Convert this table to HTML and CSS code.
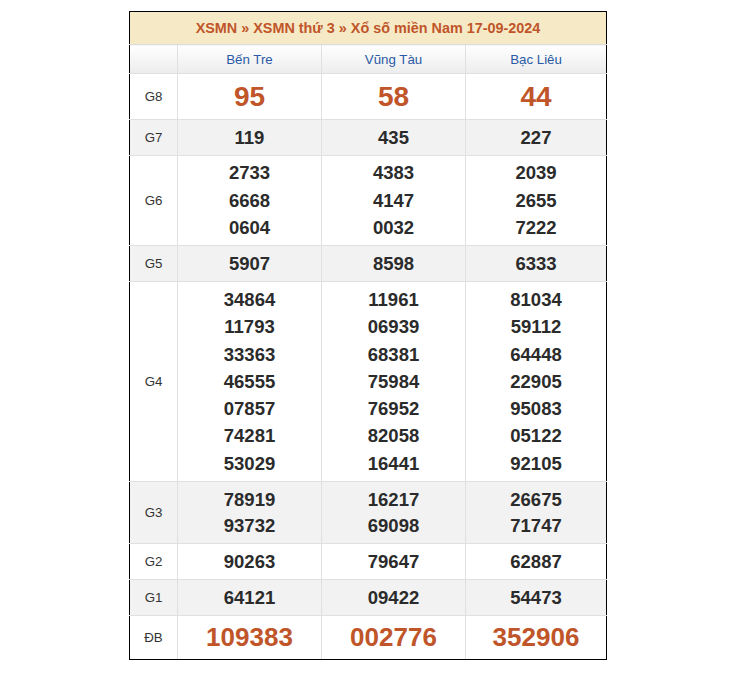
FILE: index.html
```
<!DOCTYPE html>
<html lang="vi">
<head>
<meta charset="utf-8">
<link rel="stylesheet" href="styles.css">
</head>
<body>
<table class="kq">
  <colgroup>
    <col class="c-lbl"><col class="c-prov"><col class="c-prov"><col class="c-prov-last">
  </colgroup>
  <thead>
    <tr class="r-title">
      <th colspan="4"><span>XSMN</span> » <span>XSMN thứ 3</span> » <span>Xổ số miền Nam 17-09-2024</span></th>
    </tr>
    <tr class="r-names">
      <th></th><th>Bến Tre</th><th>Vũng Tàu</th><th>Bạc Liêu</th>
    </tr>
  </thead>
  <tbody>
    <tr class="r-g8"><td class="lbl">G8</td><td class="big">95</td><td class="big">58</td><td class="big">44</td></tr>
    <tr class="r-1 alt"><td class="lbl">G7</td><td>119</td><td>435</td><td>227</td></tr>
    <tr class="r-g6"><td class="lbl">G6</td>
      <td><div>2733</div><div>6668</div><div>0604</div></td>
      <td><div>4383</div><div>4147</div><div>0032</div></td>
      <td><div>2039</div><div>2655</div><div>7222</div></td></tr>
    <tr class="r-1 alt"><td class="lbl">G5</td><td>5907</td><td>8598</td><td>6333</td></tr>
    <tr class="r-g4"><td class="lbl">G4</td>
      <td><div>34864</div><div>11793</div><div>33363</div><div>46555</div><div>07857</div><div>74281</div><div>53029</div></td>
      <td><div>11961</div><div>06939</div><div>68381</div><div>75984</div><div>76952</div><div>82058</div><div>16441</div></td>
      <td><div>81034</div><div>59112</div><div>64448</div><div>22905</div><div>95083</div><div>05122</div><div>92105</div></td></tr>
    <tr class="r-g3 alt"><td class="lbl">G3</td>
      <td><div>78919</div><div>93732</div></td>
      <td><div>16217</div><div>69098</div></td>
      <td><div>26675</div><div>71747</div></td></tr>
    <tr class="r-1"><td class="lbl">G2</td><td>90263</td><td>79647</td><td>62887</td></tr>
    <tr class="r-1 alt"><td class="lbl">G1</td><td>64121</td><td>09422</td><td>54473</td></tr>
    <tr class="r-db"><td class="lbl">ĐB</td><td class="db">109383</td><td class="db">002776</td><td class="db">352906</td></tr>
  </tbody>
</table>
</body>
</html>
```
FILE: styles.css
```
html, body {
  margin: 0;
  padding: 0;
  background: #fff;
}
body {
  padding: 11px 0 0 129px;
  font-family: "Liberation Sans", Arial, sans-serif;
}
.kq {
  border-collapse: collapse;
  table-layout: fixed;
  width: 477px;
}
.c-lbl { width: 48px; }
.c-prov { width: 144px; }
.c-prov-last { width: 141px; }

.kq th, .kq td {
  border: 1px solid #e0e0e0;
  padding: 0;
  text-align: center;
  vertical-align: middle;
}
.kq tr > :first-child { border-left: 1px solid #000; }
.kq tr > :last-child { border-right: 1px solid #000; }
.kq tbody tr:last-child > * { border-bottom: 1px solid #000; }

.r-title th {
  height: 32px;
  background: #f6eac6;
  color: #c0552a;
  font-size: 14.4px;
  font-weight: bold;
  border-top: 1px solid #000;
  border-bottom: 1px solid #dcdcdc;
}
.r-names th {
  height: 28px;
  background: linear-gradient(#ffffff, #ececec);
  color: #2a5aa6;
  font-size: 13.3px;
  font-weight: normal;
}
.kq td {
  color: #2b2b2b;
  font-weight: bold;
  font-size: 18.5px;
}
.kq td.lbl {
  font-weight: normal;
  font-size: 13.3px;
  color: #333;
}
.alt td { background: #f2f2f2; }

.r-g8 td { height: 45px; }
.r-1 td { height: 35px; }
.r-g6 td { height: 89px; }
.r-g6 td div { line-height: 27.5px; }
.r-g4 td { height: 199px; }
.r-g4 td div { line-height: 27.3px; }
.r-g3 td { height: 61px; }
.r-g3 td div { line-height: 26px; }
.r-db td { height: 43px; }

.kq td.big {
  font-size: 28px;
  color: #c0552a;
}
.kq td.db {
  font-size: 26px;
  color: #c0552a;
}
```
